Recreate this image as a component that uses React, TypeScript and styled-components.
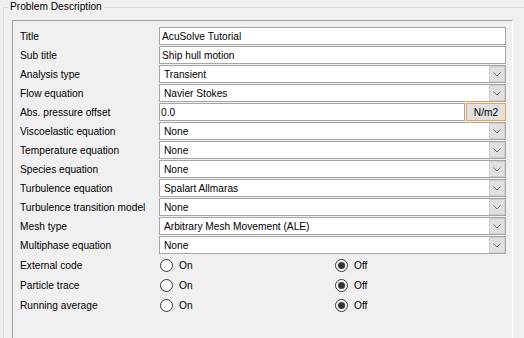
import styled, { createGlobalStyle } from "styled-components";

type Field =
  | { label: string; kind: "text"; value: string }
  | { label: string; kind: "combo"; value: string }
  | { label: string; kind: "unit"; value: string; unit: string };

const fields: Field[] = [
  { label: "Title", kind: "text", value: "AcuSolve Tutorial" },
  { label: "Sub title", kind: "text", value: "Ship hull motion" },
  { label: "Analysis type", kind: "combo", value: "Transient" },
  { label: "Flow equation", kind: "combo", value: "Navier Stokes" },
  { label: "Abs. pressure offset", kind: "unit", value: "0.0", unit: "N/m2" },
  { label: "Viscoelastic equation", kind: "combo", value: "None" },
  { label: "Temperature equation", kind: "combo", value: "None" },
  { label: "Species equation", kind: "combo", value: "None" },
  { label: "Turbulence equation", kind: "combo", value: "Spalart Allmaras" },
  { label: "Turbulence transition model", kind: "combo", value: "None" },
  { label: "Mesh type", kind: "combo", value: "Arbitrary Mesh Movement (ALE)" },
  { label: "Multiphase equation", kind: "combo", value: "None" },
];

const toggles = ["External code", "Particle trace", "Running average"];

const GlobalStyle = createGlobalStyle`
  body {
    margin: 0;
    overflow: hidden;
    background: #f0f0f0;
    font-family: "Liberation Sans", Arial, sans-serif;
    font-size: 10.2px;
    color: #000;
  }
`;

const Window = styled.div`
  height: 338px;
  overflow: hidden;
  background: #f0f0f0;
`;

const GroupBox = styled.div`
  position: relative;
  margin: 7px 0 0 3px;
  padding: 12px 0 0 8px;
  border-top: 1px solid #dcdcdc;
  border-left: 1px solid #dcdcdc;
  height: 360px;
`;

const Legend = styled.span`
  position: absolute;
  top: -8px;
  left: 4px;
  padding: 0 2px;
  line-height: 13px;
  background: #f0f0f0;
`;

const Panel = styled.div`
  box-sizing: border-box;
  width: 501px;
  height: 340px;
  padding: 6px 0 0 7px;
  border: 1px solid;
  border-color: #a0a0a0 #fff #fff #a0a0a0;
  display: flex;
  flex-direction: column;
  gap: 1px;
`;

const Row = styled.div<{ $h: number }>`
  display: grid;
  grid-template-columns: 139px 347px;
  height: ${(p) => p.$h}px;
  align-items: center;
`;

const Label = styled.span`
  white-space: nowrap;
`;

const Box = styled.div`
  box-sizing: border-box;
  height: 18px;
  background: #fff;
  border: 1px solid #a6a6a6;
  display: flex;
  align-items: center;
`;

const BoxText = styled.span<{ $pad: number }>`
  flex: 1;
  padding-left: ${(p) => p.$pad}px;
  white-space: nowrap;
  overflow: hidden;
`;

const DropButton = styled.span`
  box-sizing: border-box;
  width: 16px;
  height: 16px;
  background: #e1e1e1;
  border: 1px solid #cfcfcf;
  display: flex;
  align-items: center;
  justify-content: center;
`;

const UnitLine = styled.div`
  display: grid;
  grid-template-columns: 306px 40px;
  gap: 1px;
`;

const UnitButton = styled.span`
  box-sizing: border-box;
  height: 18px;
  background: #e1e1e1;
  border: 1px solid #f2a13f;
  display: flex;
  align-items: center;
  justify-content: center;
`;

const RadioSection = styled.div`
  margin-top: 1px;
  display: flex;
  flex-direction: column;
  gap: 1px;
`;

const RadioPair = styled.div`
  display: grid;
  grid-template-columns: 175px 172px;
`;

const RadioItem = styled.span`
  display: flex;
  align-items: center;
  gap: 6px;
  padding-left: 1px;
`;

const RadioCircle = styled.span<{ $on: boolean }>`
  box-sizing: border-box;
  width: 13px;
  height: 13px;
  border-radius: 50%;
  border: 1px solid #333;
  background: #fff;
  display: flex;
  align-items: center;
  justify-content: center;

  &::after {
    content: "";
    width: 7px;
    height: 7px;
    border-radius: 50%;
    background: ${(p) => (p.$on ? "#333" : "transparent")};
  }
`;

const Chevron = () => (
  <svg width="8" height="5" viewBox="0 0 8 5">
    <polyline points="0.5,0.5 4,4 7.5,0.5" fill="none" stroke="#707070" strokeWidth="1" />
  </svg>
);

const FieldControl = ({ field }: { field: Field }) => {
  if (field.kind === "text") {
    return (
      <Box>
        <BoxText $pad={2}>{field.value}</BoxText>
      </Box>
    );
  }
  if (field.kind === "unit") {
    return (
      <UnitLine>
        <Box>
          <BoxText $pad={1}>{field.value}</BoxText>
        </Box>
        <UnitButton>{field.unit}</UnitButton>
      </UnitLine>
    );
  }
  return (
    <Box>
      <BoxText $pad={4}>{field.value}</BoxText>
      <DropButton>
        <Chevron />
      </DropButton>
    </Box>
  );
};

export default function App() {
  return (
    <Window>
      <GlobalStyle />
      <GroupBox>
        <Legend>Problem Description</Legend>
        <Panel>
          {fields.map((f) => (
            <Row key={f.label} $h={18}>
              <Label>{f.label}</Label>
              <FieldControl field={f} />
            </Row>
          ))}
          <RadioSection>
            {toggles.map((t) => (
              <Row key={t} $h={19}>
                <Label>{t}</Label>
                <RadioPair>
                  <RadioItem>
                    <RadioCircle $on={false} />
                    On
                  </RadioItem>
                  <RadioItem>
                    <RadioCircle $on={true} />
                    Off
                  </RadioItem>
                </RadioPair>
              </Row>
            ))}
          </RadioSection>
        </Panel>
      </GroupBox>
    </Window>
  );
}
